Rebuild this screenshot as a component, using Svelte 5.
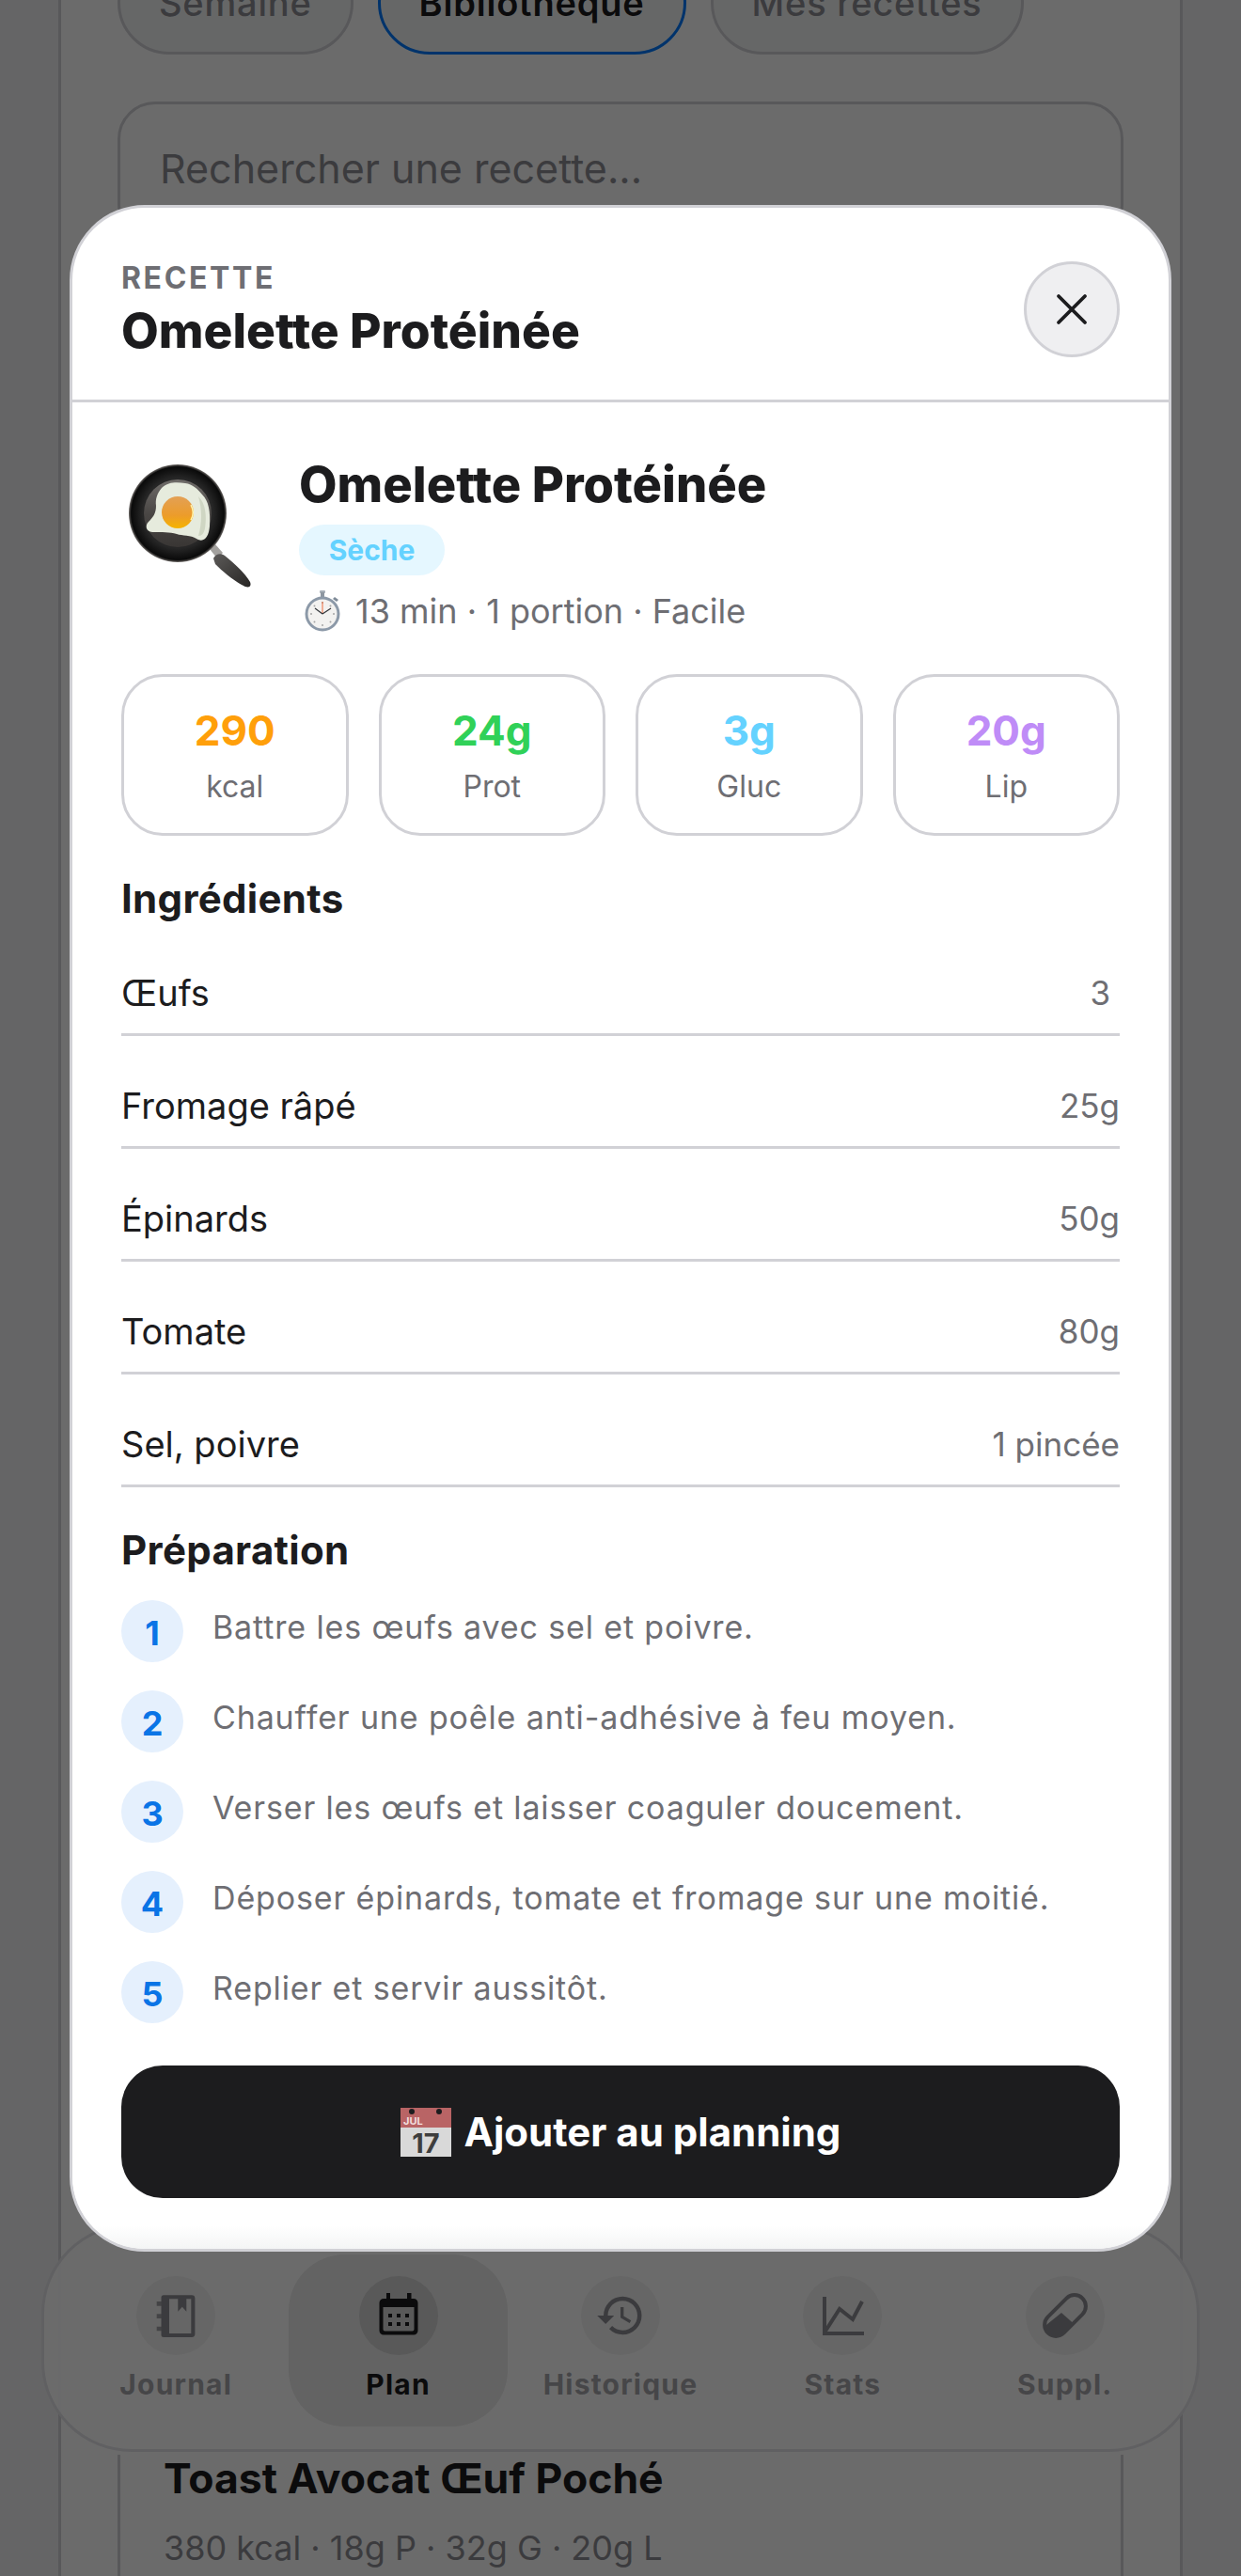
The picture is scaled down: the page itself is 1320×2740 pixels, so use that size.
<script>
	const macros = [
		{ value: '290', label: 'kcal', color: '#ff9f0a' },
		{ value: '24g', label: 'Prot', color: '#30d158' },
		{ value: '3g', label: 'Gluc', color: '#64d2ff' },
		{ value: '20g', label: 'Lip', color: '#bf8cf7' }
	];
	const ingredients = [
		['Œufs', '3\u00a0'],
		['Fromage râpé', '25g'],
		['Épinards', '50g'],
		['Tomate', '80g'],
		['Sel, poivre', '1 pincée']
	];
	const steps = [
		'Battre les œufs avec sel et poivre.',
		'Chauffer une poêle anti-adhésive à feu moyen.',
		'Verser les œufs et laisser coaguler doucement.',
		'Déposer épinards, tomate et fromage sur une moitié.',
		'Replier et servir aussitôt.'
	];
</script>

<div class="screen">
	<div class="page">
		<div class="chips">
			<span class="chip">Semaine</span>
			<span class="chip active">Bibliothèque</span>
			<span class="chip">Mes recettes</span>
		</div>
		<div class="search">Rechercher une recette...</div>
		<div class="card">
			<h3>Toast Avocat Œuf Poché</h3>
			<p>380 kcal · 18g P · 32g G · 20g L</p>
		</div>
	</div>

	<nav class="tabbar">
		<div class="tab">
			<span class="tabIcon">
				<svg width="48" height="48" viewBox="0 0 48 48">
					<path fill-rule="evenodd" d="M11 2.3H41a3.4 3.4 0 0 1 3.4 3.4V43.600a3.400 3.400 0 0 1-3.400 3.400H11a2.500 2.500 0 0 1-2.500-2.500V4.800a2.500 2.500 0 0 1 2.500-2.500ZM17 6.300V43H40.300V6.300H35.300V19.700L30.800 14.700L26.300 19.700V6.300Z" />
					<path opacity="0.8" d="M3.700 9H13V13.700H3.700ZM3.700 22.300H13V27H3.700ZM3.700 35.700H13V40.300H3.700Z" />
				</svg>
			</span>
			<span class="tabLabel">Journal</span>
		</div>
		<div class="tab current">
			<span class="tabIcon">
				<svg width="48" height="48" viewBox="0 0 48 48">
					<path d="M11 0H15V6H33V0H37.500V6H40A4.500 4.500 0 0 1 44.500 10.500V40A4.500 4.500 0 0 1 40 44.500H8A4.500 4.500 0 0 1 3.500 40V10.500A4.500 4.500 0 0 1 8 6H11ZM7.500 15V38.500A2 2 0 0 0 9.500 40.500H38.500A2 2 0 0 0 40.500 38.500V15Z" fill-rule="evenodd" />
					<path d="M13 22H17V26H13ZM22 22H26V26H22ZM31 22H35V26H31ZM13 31H17V35H13ZM22 31H26V35H22ZM31 31H35V35H31Z" />
				</svg>
			</span>
			<span class="tabLabel">Plan</span>
		</div>
		<div class="tab">
			<span class="tabIcon">
				<svg width="54" height="54" viewBox="0 0 24 24">
					<path d="M13 3a9 9 0 0 0-9 9H1l3.890 3.890.07.14L9 12H6c0-3.870 3.130-7 7-7s7 3.130 7 7-3.130 7-7 7c-1.930 0-3.680-.79-4.940-2.060l-1.420 1.420A8.954 8.954 0 0 0 13 21a9 9 0 0 0 0-18zm-1 5v5l4.280 2.540.72-1.210-3.500-2.080V8H12z" />
				</svg>
			</span>
			<span class="tabLabel">Historique</span>
		</div>
		<div class="tab">
			<span class="tabIcon">
				<svg width="48" height="48" viewBox="0 0 48 48" fill="none" stroke="#8e8e93" stroke-width="4">
					<path d="M5 4V43H47" />
					<path d="M5 42L21 17L35 28L45 9" />
				</svg>
			</span>
			<span class="tabLabel">Stats</span>
		</div>
		<div class="tab">
			<span class="tabIcon">
				<svg width="48" height="48" viewBox="0 0 48 48">
					<defs>
						<clipPath id="pillClip">
							<rect x="12" y="-2" width="24" height="52" rx="12" transform="rotate(45 24 24)" />
						</clipPath>
					</defs>
					<path clip-path="url(#pillClip)" d="M0 37L20 21L38 37V50H0Z" />
					<rect x="12" y="-2" width="24" height="52" rx="12" transform="rotate(45 24 24)" fill="none" stroke="#8e8e93" stroke-width="4" />
				</svg>
			</span>
			<span class="tabLabel">Suppl.</span>
		</div>
	</nav>

	<div class="dim"></div>

	<section class="modal">
		<header class="modalHead">
			<div>
				<div class="eyebrow">RECETTE</div>
				<h2 class="headTitle">Omelette Protéinée</h2>
			</div>
			<button class="close" aria-label="Fermer">
				<svg width="34" height="34" viewBox="0 0 34 34" fill="none" stroke="#1c1c1e" stroke-width="3.800" stroke-linecap="round">
					<path d="M3 3L31 31M31 3L3 31" />
				</svg>
			</button>
		</header>

		<div class="modalBody">
			<div class="hero">
				<svg class="panEmoji" width="136" height="136" viewBox="0 0 136 136">
					<defs>
						<radialGradient id="panRim" cx="0.5" cy="0.5" r="0.5">
							<stop offset="0.72" stop-color="#262626" />
							<stop offset="0.95" stop-color="#0a0a0a" />
							<stop offset="1" stop-color="#6d6966" />
						</radialGradient>
						<linearGradient id="panInner" x1="0" y1="0" x2="0" y2="1">
							<stop offset="0" stop-color="#6f6c69" />
							<stop offset="0.5" stop-color="#4a4745" />
							<stop offset="1" stop-color="#393634" />
						</linearGradient>
						<linearGradient id="yolk" x1="0" y1="0" x2="0" y2="1">
							<stop offset="0" stop-color="#e3a055" />
							<stop offset="0.6" stop-color="#ec9c2a" />
							<stop offset="1" stop-color="#f6b400" />
						</linearGradient>
						<linearGradient id="handle" x1="0" y1="0" x2="1" y2="1">
							<stop offset="0" stop-color="#5c5a58" />
							<stop offset="1" stop-color="#272524" />
						</linearGradient>
					</defs>
					<path d="M86 90L92 85L100 94L94 100Z" fill="#a3a19e" />
					<path d="M90 100C92 95 98 94 102 97C112 105 124 116 129 125C131 130 127 132 122 129C112 124 100 114 92 106Z" fill="url(#handle)" />
					<circle cx="52" cy="52" r="52" fill="url(#panRim)" />
					<circle cx="52" cy="52" r="36" fill="url(#panInner)" />
					<path d="M35 25C42 18 52 19 60 20C68 21 73 26 78 32C85 39 87 50 86 66C85 77 80 84 72 79C66 75 57 76 51 74C43 72 36 72 25 72C18 71 17 65 21 61C26 56 29 52 29 44C28 37 30 31 35 25Z" fill="#e6ebdd" />
					<path d="M74 34C82 42 83 55 81 68C80 73 78 76 74 76C78 62 78 48 74 34Z" fill="#cfd6c3" />
					<circle cx="52" cy="51" r="17" fill="url(#yolk)" />
					<path d="M66 43A16 16 0 0 1 66 59" stroke="#fff3a8" stroke-width="1.500" fill="none" />
				</svg>
				<div class="heroText">
					<h1>Omelette Protéinée</h1>
					<span class="badge">Sèche</span>
					<div class="meta">
						<svg width="38" height="46" viewBox="0 0 38 46">
							<rect x="16" y="1" width="6" height="3" rx="1" fill="#a6aeb7" />
							<rect x="17" y="3" width="4" height="5" fill="#8d96a0" />
							<path d="M32 8L36 11L34 13L30 10Z" fill="#7f8b98" />
							<circle cx="19" cy="26" r="18.500" fill="#8c99a8" />
							<circle cx="19" cy="26" r="15.500" fill="#f3f2f0" />
							<g fill="#a5a5a5">
								<circle cx="19" cy="14" r="1" />
								<circle cx="19" cy="38" r="1" />
								<circle cx="7" cy="26" r="1" />
								<circle cx="31" cy="26" r="1" />
								<circle cx="10.500" cy="17.500" r="1" />
								<circle cx="27.500" cy="34.500" r="1" />
								<circle cx="10.500" cy="34.500" r="1" />
								<circle cx="27.500" cy="17.500" r="1" />
							</g>
							<path d="M19 13V26" stroke="#ef6a3d" stroke-width="1" />
							<path d="M19 26L28 20M19 26L11 20" stroke="#34373b" stroke-width="1.200" />
						</svg>
						<span>13 min · 1 portion · Facile</span>
					</div>
				</div>
			</div>

			<div class="macros">
				{#each macros as macro}
					<div class="macro">
						<strong style="color: {macro.color}">{macro.value}</strong>
						<span>{macro.label}</span>
					</div>
				{/each}
			</div>

			<h4 class="sectionTitle">Ingrédients</h4>
			<ul class="ingredients">
				{#each ingredients as [name, qty]}
					<li>
						<span>{name}</span>
						<span class="qty">{qty}</span>
					</li>
				{/each}
			</ul>

			<h4 class="sectionTitle prep">Préparation</h4>
			<ol class="steps">
				{#each steps as step, index}
					<li>
						<span class="num">{index + 1}</span>
						<span class="stepText">{step}</span>
					</li>
				{/each}
			</ol>
		</div>

		<div class="modalFoot">
			<button class="cta">
				<svg width="54" height="52" viewBox="0 0 54 52">
					<rect x="0" y="0" width="54" height="52" fill="#d9d9d9" />
					<rect x="0" y="0" width="54" height="21" fill="#b96465" />
					<circle cx="12" cy="4" r="3" fill="#1c1c1e" />
					<circle cx="41" cy="4" r="3" fill="#1c1c1e" />
					<text x="3" y="18" font-size="11" fill="#f2dede" font-family="Inter, sans-serif">JUL</text>
					<text x="27" y="48" font-size="29" text-anchor="middle" fill="#3e3e3e" font-family="Inter, sans-serif">17</text>
				</svg>
				<span>Ajouter au planning</span>
			</button>
		</div>
	</section>
</div>

<style>
	:global(body) {
		margin: 0;
		background: #f1f1f2;
	}

	.screen {
		position: relative;
		height: 2740px;
		overflow: hidden;
		font-family: Inter, "Liberation Sans", sans-serif;
		color: #1c1c1e;
		background: #f1f1f2;
	}

	.page {
		box-sizing: border-box;
		width: 1196px;
		height: 2950px;
		margin: -52px auto 0;
		padding: 0 60px;
		background: #fff;
		border-left: 3px solid #d1d1d6;
		border-right: 3px solid #d1d1d6;
	}

	.chips {
		display: flex;
		gap: 26px;
	}

	.chip {
		box-sizing: border-box;
		height: 110px;
		padding: 0 41px;
		display: flex;
		align-items: center;
		border: 3px solid #d1d1d6;
		border-radius: 55px;
		background: #f4f5f6;
		color: #8e8e93;
		font-size: 38px;
		letter-spacing: 0.800px;
		font-weight: 500;
	}

	.chip.active {
		border-color: #007aff;
		color: #1c1c1e;
		font-weight: 600;
	}

	.search {
		box-sizing: border-box;
		height: 150px;
		margin-top: 50px;
		padding: 42px 42px 0;
		border: 3px solid #d1d1d6;
		border-radius: 40px;
		font-size: 43px;
		color: #8e8e93;
	}

	.card {
		box-sizing: border-box;
		height: 800px;
		margin-top: 2353px;
		padding: 0 46px;
		border: 3px solid #d1d1d6;
		border-top: 0;
	}

	.card h3 {
		margin: 0;
		font-size: 44.500px;
		line-height: 50px;
		font-weight: 700;
	}

	.card p {
		margin: 28px 0 0;
		font-size: 36px;
		line-height: 42px;
		color: #8e8e93;
	}

	.tabbar {
		position: absolute;
		left: 44px;
		top: 2365px;
		box-sizing: border-box;
		width: 1232px;
		height: 243px;
		padding: 30px 22px 0;
		display: grid;
		grid-template-columns: repeat(5, 1fr);
		background: rgba(255, 255, 255, 0.96);
		border: 3px solid #e5e5ea;
		border-radius: 96px;
	}

	.tab {
		display: flex;
		flex-direction: column;
		align-items: center;
		height: 183px;
		border-radius: 60px;
		padding-top: 23px;
		box-sizing: border-box;
		margin: 0 2px;
	}

	.tab.current {
		background: rgba(0, 0, 0, 0.08);
	}

	.tabIcon {
		width: 84px;
		height: 84px;
		border-radius: 50%;
		display: flex;
		align-items: center;
		justify-content: center;
		background: rgba(0, 0, 0, 0.05);
		fill: #8e8e93;
	}

	.tab.current .tabIcon {
		background: rgba(0, 0, 0, 0.1);
		fill: #1c1c1e;
	}

	.tabLabel {
		margin-top: 13px;
		font-size: 30px;
		line-height: 36px;
		font-weight: 700;
		letter-spacing: 1.200px;
		color: #a8a8ad;
	}

	.tab.current .tabLabel {
		color: #1c1c1e;
	}

	.dim {
		position: absolute;
		inset: 0;
		background: rgba(0, 0, 0, 0.58);
	}

	.modal {
		position: absolute;
		left: 74px;
		top: 218px;
		box-sizing: border-box;
		width: 1172px;
		height: 2177px;
		display: flex;
		flex-direction: column;
		background: #fff;
		border: 3px solid #d1d1d6;
		border-radius: 80px;
		overflow: hidden;
	}

	.modalHead {
		box-sizing: border-box;
		height: 207px;
		padding: 57px 52px 0;
		display: flex;
		justify-content: space-between;
		align-items: flex-start;
		border-bottom: 3px solid #d1d1d6;
	}

	.eyebrow {
		font-size: 32px;
		line-height: 36px;
		font-weight: 700;
		letter-spacing: 2.600px;
		color: #6e6e73;
	}

	.headTitle {
		margin: 6px 0 0;
		font-size: 51.500px;
		line-height: 62px;
		font-weight: 800;
	}

	.close {
		box-sizing: border-box;
		width: 102px;
		height: 102px;
		padding: 0;
		display: flex;
		align-items: center;
		justify-content: center;
		background: #efeff1;
		border: 3px solid #d1d1d6;
		border-radius: 50%;
	}

	.modalBody {
		flex: 1;
		padding: 0 52px;
	}

	.hero {
		display: flex;
		gap: 53px;
		padding-top: 57px;
	}

	.panEmoji {
		flex: none;
		margin: 9px -8px 0 8px;
	}

	.heroText h1 {
		margin: 0;
		font-size: 52.500px;
		line-height: 60px;
		font-weight: 800;
	}

	.badge {
		display: block;
		box-sizing: border-box;
		width: 155px;
		height: 54px;
		margin-top: 13px;
		text-align: center;
		border-radius: 27px;
		background: #e5f7ff;
		color: #64d2ff;
		font-size: 30px;
		line-height: 54px;
		font-weight: 700;
	}

	.meta {
		display: flex;
		align-items: center;
		gap: 16px;
		margin-top: 15px;
		margin-left: 6px;
		font-size: 36px;
		color: #6e6e73;
	}

	.macros {
		display: grid;
		grid-template-columns: repeat(4, 1fr);
		gap: 32px;
		margin-top: 44px;
	}

	.macro {
		box-sizing: border-box;
		height: 172px;
		display: flex;
		flex-direction: column;
		align-items: center;
		padding-top: 30px;
		border: 3px solid #d1d1d6;
		border-radius: 44px;
	}

	.macro strong {
		font-size: 44px;
		line-height: 54px;
		font-weight: 700;
	}

	.macro span {
		margin-top: 13px;
		font-size: 32px;
		line-height: 40px;
		color: #6e6e73;
	}

	.sectionTitle {
		margin: 42px 0 0;
		font-size: 42px;
		line-height: 50px;
		font-weight: 700;
		letter-spacing: 0.300px;
	}

	.ingredients {
		list-style: none;
		margin: 15px 0 0;
		padding: 0;
	}

	.ingredients li {
		box-sizing: border-box;
		height: 120px;
		padding-top: 30px;
		display: flex;
		justify-content: space-between;
		align-items: center;
		border-bottom: 3px solid #d1d1d6;
		font-size: 38px;
	}

	.ingredients li:first-child {
		height: 106px;
		padding-top: 16px;
	}

	.qty {
		font-size: 35px;
		color: #6e6e73;
	}

	.prep {
		margin-top: 42px;
	}

	.steps {
		list-style: none;
		margin: 28px 0 0;
		padding: 0;
		display: flex;
		flex-direction: column;
		gap: 30px;
	}

	.steps li {
		display: flex;
		gap: 31px;
	}

	.num {
		flex: none;
		width: 66px;
		height: 66px;
		border-radius: 50%;
		text-align: center;
		background: #e5f0fd;
		color: #0a74e6;
		font-size: 36px;
		line-height: 70px;
		font-weight: 700;
	}

	.stepText {
		padding-top: 4px;
		font-size: 34px;
		line-height: 50px;
		letter-spacing: 0.860px;
		color: #6e6e73;
	}

	.modalFoot {
		padding: 0 52px 54px;
		background: linear-gradient(#fff, #fff 170px, #f4f5f5);
	}

	.cta {
		width: 100%;
		height: 141px;
		display: flex;
		align-items: center;
		justify-content: center;
		gap: 14px;
		border: 0;
		border-radius: 44px;
		background: #1c1c1e;
		color: #fff;
		font-family: inherit;
		font-size: 42px;
		font-weight: 700;
	}
</style>
